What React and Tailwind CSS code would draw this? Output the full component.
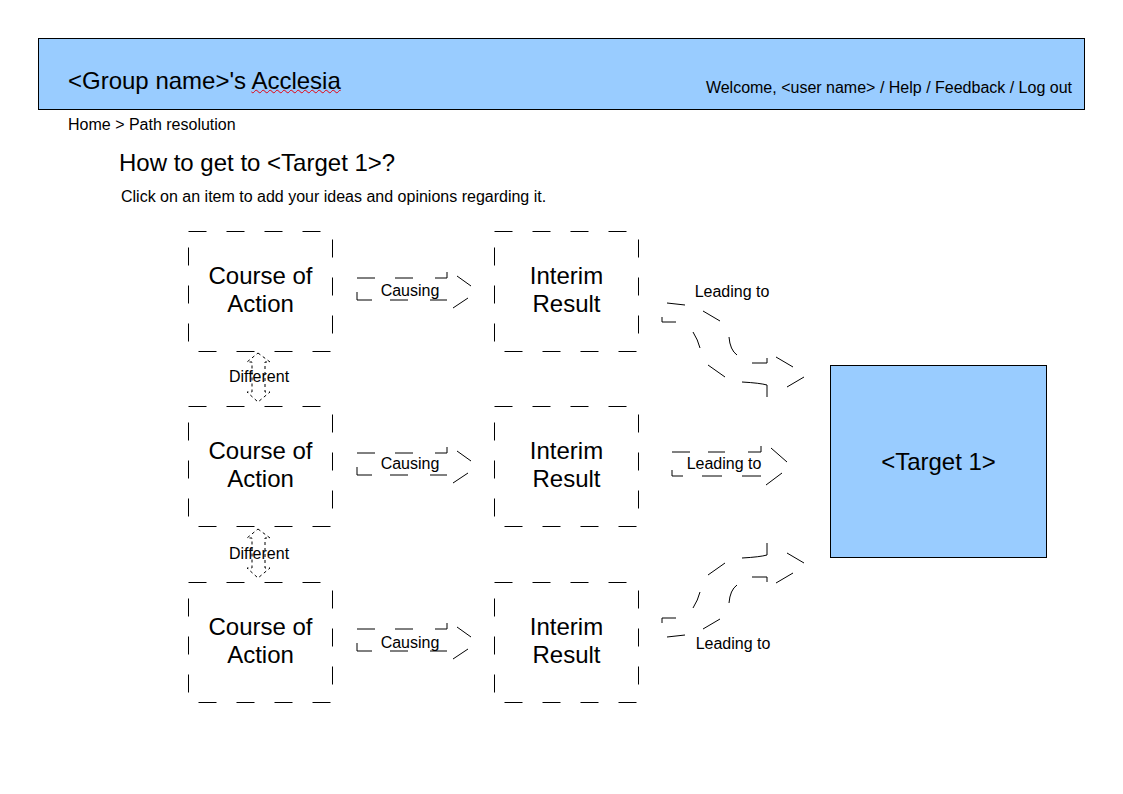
import React from "react";

const rows = [
  { top: 11, box: "top-[11px]" },
  { top: 186, box: "top-[186px]" },
  { top: 362, box: "top-[362px]" },
];

const labels = [
  { text: "Causing", cls: "left-[410px] top-[71px]" },
  { text: "Causing", cls: "left-[410px] top-[244px]" },
  { text: "Causing", cls: "left-[410px] top-[423px]" },
  { text: "Leading to", cls: "left-[732px] top-[72px]" },
  { text: "Leading to", cls: "left-[724px] top-[244px]" },
  { text: "Leading to", cls: "left-[733px] top-[424px]" },
  { text: "Different", cls: "left-[259px] top-[157px]" },
  { text: "Different", cls: "left-[259px] top-[334px]" },
];

// dashed curved arrow toward the target, upper row; the lower one is mirrored
const curved =
  "M667,83 Q676,84 685,85 M662,97 V102 H676 M703,91 L720,101 M693,112 Q698,120 700,128 " +
  "M729,117 Q730,130 737,135 M752,143 H767 V138 M776,137 L793,147 M708,145 L725,157 " +
  "M742,162 Q760,163 767,165 V177 M787,167 L804,157";

function DashedBox({ className, children }) {
  return (
    <div className={`absolute w-[145px] h-[121px] pb-[4px] flex items-center justify-center text-center text-[24px] leading-[28px] ${className}`}>
      <svg className="absolute inset-0" width="145" height="121">
        <rect x="0.5" y="0.5" width="144" height="120" fill="none" stroke="#000" strokeDasharray="18 20" />
      </svg>
      <span className="relative">{children}</span>
    </div>
  );
}

function Connectors() {
  const line = { fill: "none", stroke: "#000", strokeWidth: 1 };
  const fine = { fill: "none", stroke: "#000", strokeWidth: 1, strokeDasharray: "3 3" };
  return (
    <svg className="absolute inset-0 pointer-events-none" width="1123" height="500">
      {rows.map(({ top: T }) => (
        <path
          key={T}
          {...line}
          d={`M357,${T + 47}h18 M395,${T + 47}h18 M435,${T + 47}h12v-6 M357,${T + 61}v8h15 M390,${T + 69}h18 M430,${T + 69}h17 M457,${T + 45}L471,${T + 55} M468,${T + 67}L453,${T + 77}`}
        />
      ))}
      <path {...line} d="M672,232h18 M708,232h17 M748,232h13v-6 M672,250v6h11 M702,256h20 M742,256h19 M771,228L787,242 M782,253L766,265" />
      <path {...line} d={curved} />
      <g transform="translate(0,500) scale(1,-1)">
        <path {...line} d={curved} />
      </g>
      {[0, 176].map((o) => (
        <polygon
          key={o}
          {...fine}
          points={`258,${133 + o} 270,${142 + o} 265,${142 + o} 265,${172 + o} 270,${172 + o} 258,${182 + o} 247,${172 + o} 252,${172 + o} 252,${142 + o} 247,${142 + o}`}
        />
      ))}
    </svg>
  );
}

export default function App() {
  return (
    <div className="w-[1123px] h-[794px] overflow-hidden bg-white text-black pt-[38px] font-['Liberation_Sans',Arial,sans-serif]">
      <header className="mx-[38px] h-[72px] border border-black bg-[#99ccff] flex items-end justify-between pl-[29px] pr-[12px] pb-[12px]">
        <h1 className="text-[24px] leading-[28px] mb-[2px]">
          &lt;Group name&gt;'s{" "}
          <span className="underline decoration-wavy decoration-red-600 decoration-1 underline-offset-[0px]">Acclesia</span>
        </h1>
        <nav className="text-[16px] leading-[18px]">Welcome, &lt;user name&gt; / Help / Feedback / Log out</nav>
      </header>

      <div className="ml-[68px] mt-[6px] text-[16px] leading-[18px]">Home &gt; Path resolution</div>
      <h2 className="ml-[119px] mt-[15px] text-[24px] leading-[28px]">How to get to &lt;Target 1&gt;?</h2>
      <p className="ml-[121px] mt-[11px] text-[16px] leading-[18px]">Click on an item to add your ideas and opinions regarding it.</p>

      <div className="relative h-[500px] mt-[14px]">
        {rows.map((r) => (
          <React.Fragment key={r.top}>
            <DashedBox className={`left-[188px] ${r.box}`}>Course of<br />Action</DashedBox>
            <DashedBox className={`left-[494px] ${r.box}`}>Interim<br />Result</DashedBox>
          </React.Fragment>
        ))}
        <div className="absolute left-[830px] top-[145px] w-[217px] h-[193px] bg-[#99ccff] border border-black flex items-center justify-center text-[24px]">
          &lt;Target 1&gt;
        </div>
        <Connectors />
        {labels.map((l, i) => (
          <div key={i} className={`absolute -translate-x-1/2 -translate-y-1/2 whitespace-nowrap text-[16px] leading-[18px] ${l.cls}`}>
            {l.text}
          </div>
        ))}
      </div>
    </div>
  );
}
